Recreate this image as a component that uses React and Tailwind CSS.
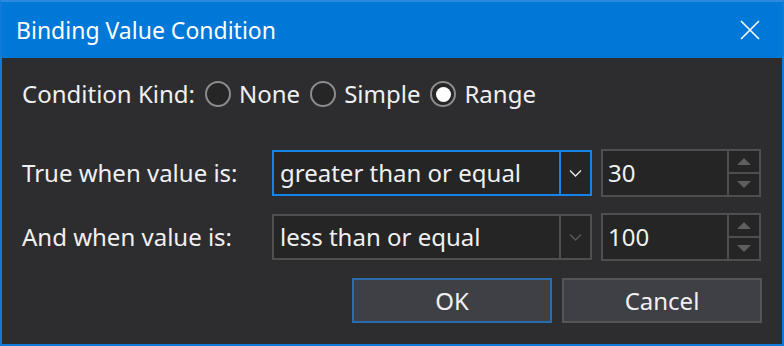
import React, { useState } from "react";

function Radio({ label, checked, onClick }) {
  return (
    <button type="button" onClick={onClick} className="flex items-center mr-[10px]">
      <span className="w-[26px] h-[26px] rounded-full border-2 border-[#8c8c8c] bg-[#262626] flex items-center justify-center">
        {checked && <span className="w-[15px] h-[15px] rounded-full bg-white" />}
      </span>
      <span className="ml-[8px]">{label}</span>
    </button>
  );
}

function Combo({ value, focused }) {
  const border = focused ? "border-[#1683e8]" : "border-[#4f4f4f]";
  return (
    <div className={`flex w-[320px] h-[46px] border-2 ${border} bg-[#252526]`}>
      <div className="flex-1 flex items-center pl-[6px]">{value}</div>
      <div className={`w-[31px] border-l-2 ${border} flex items-center justify-center`}>
        <svg width="13" height="8" viewBox="0 0 13 8">
          <path
            d="M1 1.5 L6.5 7 L12 1.5"
            fill="none"
            stroke={focused ? "#e8e8e8" : "#5a5a5a"}
            strokeWidth="1.4"
          />
        </svg>
      </div>
    </div>
  );
}

function Spinner({ value }) {
  return (
    <div className="flex w-[160px] h-[48px] border-2 border-[#4f4f4f] bg-[#252526]">
      <div className="flex-1 flex items-center pl-[5px]">{value}</div>
      <div className="w-[32px] border-l-2 border-[#4f4f4f] flex flex-col">
        <div className="flex-1 flex items-center justify-center border-b-2 border-[#4f4f4f]">
          <svg width="14" height="7" viewBox="0 0 14 7">
            <path d="M0 7 L7 0 L14 7 Z" fill="#5e5e5e" />
          </svg>
        </div>
        <div className="flex-1 flex items-center justify-center">
          <svg width="14" height="7" viewBox="0 0 14 7">
            <path d="M0 0 L7 7 L14 0 Z" fill="#5e5e5e" />
          </svg>
        </div>
      </div>
    </div>
  );
}

export default function App() {
  const [kind, setKind] = useState("Range");

  return (
    <div
      className="w-[784px] h-[346px] flex flex-col border-2 border-[#0f7ad8] border-t-[#2b8ae0] text-[24px] text-[#f0f0f0]"
      style={{ fontFamily: '"Noto Sans", "Open Sans", sans-serif' }}
    >
      {/* title bar */}
      <div className="h-[56px] shrink-0 bg-[#0078d7] flex items-center pl-[14px] pr-[22px] text-white text-[23px]">
        <span className="flex-1">Binding Value Condition</span>
        <svg width="20" height="20" viewBox="0 0 20 20">
          <path d="M1 1 L19 19 M19 1 L1 19" stroke="#ffffff" strokeWidth="1.6" />
        </svg>
      </div>

      <div className="flex-1 bg-[#2d2d30] pl-[20px] pt-[21px] flex flex-col">
        <div className="h-[30px] flex items-center">
          <span className="mr-[10px]">Condition Kind:</span>
          {["None", "Simple", "Range"].map((k) => (
            <Radio key={k} label={k} checked={kind === k} onClick={() => setKind(k)} />
          ))}
        </div>

        <div className="mt-[40px] h-[48px] flex items-center">
          <span className="w-[250px]">True when value is:</span>
          <Combo value="greater than or equal" focused />
          <div className="ml-[9px]">
            <Spinner value="30" />
          </div>
        </div>

        <div className="mt-[16px] h-[48px] flex items-center">
          <span className="w-[250px]">And when value is:</span>
          <Combo value="less than or equal" />
          <div className="ml-[9px]">
            <Spinner value="100" />
          </div>
        </div>

        <div className="mt-[17px] flex justify-end pr-[20px] gap-[10px]">
          <button className="w-[200px] h-[45px] bg-[#3f3f46] border-2 border-[#2a6cae]">OK</button>
          <button className="w-[200px] h-[45px] bg-[#3f3f46] border-2 border-[#555555]">Cancel</button>
        </div>
      </div>
    </div>
  );
}
